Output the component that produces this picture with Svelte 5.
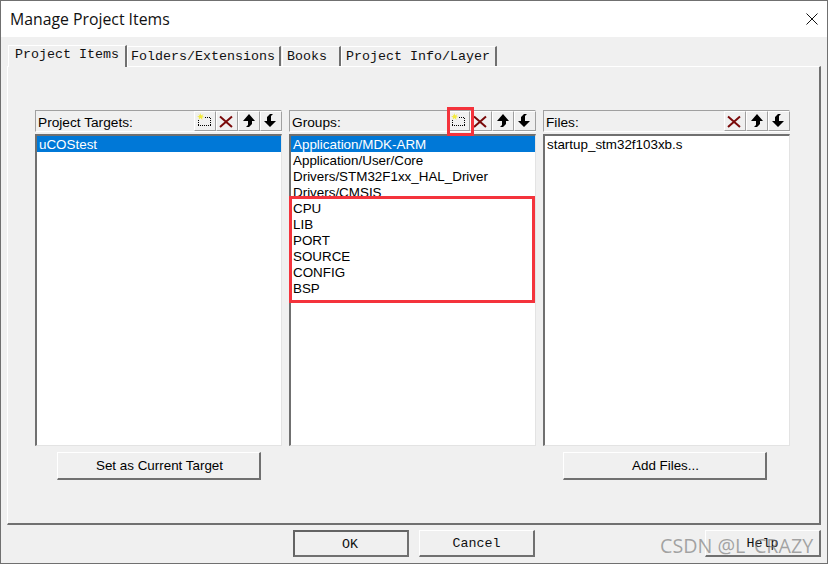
<script>
  const panels = [
    { title: 'Project Targets:', tools: ['new', 'del', 'up', 'down'], items: ['uCOStest'], selected: 0 },
    {
      title: 'Groups:',
      tools: ['new', 'del', 'up', 'down'],
      items: ['Application/MDK-ARM', 'Application/User/Core', 'Drivers/STM32F1xx_HAL_Driver', 'Drivers/CMSIS', 'CPU', 'LIB', 'PORT', 'SOURCE', 'CONFIG', 'BSP'],
      selected: 0
    },
    { title: 'Files:', tools: ['del', 'up', 'down'], items: ['startup_stm32f103xb.s'], selected: -1 }
  ];
  const tabs = ['Project Items', 'Folders/Extensions', 'Books', 'Project Info/Layer'];
</script>

<div class="dialog">
  <header class="titlebar">
    <span class="title">Manage Project Items</span>
    <svg class="close" width="12" height="12" viewBox="0 0 12 12"><path d="M0.5 0.5 L11.5 11.5 M11.5 0.5 L0.5 11.5" stroke="#111" stroke-width="1" fill="none" /></svg>
  </header>

  <div class="body">
    <div class="tabs">
      {#each tabs as tab, i}
        <div class="tab" class:active={i === 0}>{tab}</div>
      {/each}
    </div>

    <div class="sheet">
      <div class="columns">
        {#each panels as panel}
          <section class="panel">
            <div class="panel-head">
              <span class="panel-title">{panel.title}</span>
              <div class="tools">
                {#each panel.tools as tool}
                  <div class="tool">
                    {#if tool === 'new'}
                      <svg width="16" height="16" viewBox="0 0 16 16">
                        <path d="M1 12.5 H14 M13.5 12 V4 M13 4.5 H7 M1.5 12 V7" fill="none" stroke="#000" stroke-width="1" stroke-dasharray="1 1" />
                        <path d="M3.5 0 L4.2 2.4 L6.6 1 L5.2 3.2 L7.4 4 L5 4.4 L5.4 7 L3.6 5 L1.6 6.6 L2.2 4.4 L0 3.6 L2.4 3 L1.4 1 L3 2.2 Z" fill="#f2ea3c" />
                      </svg>
                    {:else if tool === 'del'}
                      <svg width="16" height="16" viewBox="0 0 16 16"><path d="M1 3.5 L13 14 M13 3.5 L1 14" stroke="#7a0a0a" stroke-width="2" fill="none" /></svg>
                    {:else if tool === 'up'}
                      <svg width="16" height="16" viewBox="0 0 16 16"><path d="M8 1 L14 8 L11 8 L11 11 L8 14 L5 14 L7 12 L7 8 L2 8 Z" fill="#000" /></svg>
                    {:else}
                      <svg width="16" height="16" viewBox="0 0 16 16"><path d="M7 14 L1 8 L4 8 L4 4 L7 1 L10 1 L8 3 L8 8 L13 8 Z" fill="#000" /></svg>
                    {/if}
                  </div>
                {/each}
              </div>
            </div>
            <div class="list">
              {#each panel.items as item, i}
                <div class="row" class:selected={i === panel.selected}>{item}</div>
              {/each}
            </div>
          </section>
        {/each}
      </div>
      <div class="actions">
        <button type="button" class="btn">Set as Current Target</button>
        <button type="button" class="btn">Add Files...</button>
      </div>
    </div>

    <div class="footer">
      <button type="button" class="foot-btn default">OK</button>
      <button type="button" class="foot-btn">Cancel</button>
      <button type="button" class="foot-btn help">Help</button>
    </div>
  </div>

  <div class="mark mark-tool"></div>
  <div class="mark mark-list"></div>
  <div class="watermark">CSDN @L_CRAZY</div>
</div>

<style>
  :global(body) {
    margin: 0;
    background: #f0f0f0;
  }

  .dialog {
    position: relative;
    box-sizing: border-box;
    width: 828px;
    height: 564px;
    border: 1px solid #707070;
    background: #f0f0f0;
    overflow: hidden;
    font-family: "Liberation Sans", Arial, sans-serif;
    font-size: 13.33px;
    color: #000;
  }

  .titlebar {
    height: 36px;
    background: #fff;
    display: flex;
    align-items: center;
    justify-content: space-between;
    padding: 0 8px 0 9px;
  }

  .title {
    font-family: "Open Sans", "Liberation Sans", sans-serif;
    font-size: 15.8px;
    color: #111;
  }

  .close {
    margin-right: 1px;
  }

  .body {
    padding: 7px 6px 0 6px;
  }

  .tabs {
    display: flex;
    align-items: flex-end;
    height: 22px;
    padding-left: 1px;
    font-family: "Liberation Mono", monospace;
    font-size: 13.33px;
    color: #111;
  }

  .tab {
    box-sizing: border-box;
    height: 20px;
    padding: 1px 4px 0 3px;
    line-height: 17px;
    border-top: 1px solid #fff;
    border-left: 1px solid #fff;
    border-right: 2px solid #707070;
  }

  .tab:nth-child(3) {
    padding: 1px 12px 0 4px;
    margin-left: 1px;
  }

  .tab:nth-child(4) {
    padding: 1px 5px 0 4px;
  }

  .tab.active {
    height: 22px;
    padding: 0 6px 0 6px;
    line-height: 18px;
    margin-bottom: -1px;
    position: relative;
    background: #f0f0f0;
  }

  .sheet {
    box-sizing: border-box;
    height: 459px;
    border-top: 1px solid #fff;
    border-left: 1px solid #fff;
    border-right: 2px solid #707070;
    border-bottom: 2px solid #707070;
    padding: 43px 30px 0 27px;
  }

  .columns {
    display: grid;
    grid-template-columns: repeat(3, 247px);
    column-gap: 7px;
  }

  .panel-head {
    box-sizing: border-box;
    height: 22px;
    display: flex;
    align-items: center;
    justify-content: space-between;
    padding-left: 2px;
    border: 1px solid #a0a0a0;
    border-right-color: #fff;
    border-bottom-color: #fff;
  }

  .panel-title {
    padding-top: 2px;
    font-size: 13.7px;
  }

  .tools {
    display: flex;
    margin-right: -1px;
  }

  .tool {
    box-sizing: border-box;
    width: 22px;
    height: 20px;
    display: flex;
    align-items: center;
    justify-content: center;
    background: #f0f0f0;
    border-left: 1px solid #fff;
    border-top: 1px solid #fff;
    border-right: 1px solid #a0a0a0;
    border-bottom: 1px solid #a0a0a0;
  }

  .list {
    box-sizing: border-box;
    height: 312px;
    margin-top: 2px;
    background: #fff;
    border-top: 2px solid #707070;
    border-left: 2px solid #707070;
    border-right: 1px solid #e3e3e3;
    border-bottom: 1px solid #e3e3e3;
    overflow: hidden;
  }

  .row {
    box-sizing: border-box;
    height: 16px;
    line-height: 16px;
    padding: 1px 0 0 2px;
    white-space: nowrap;
    font-size: 13.4px;
  }

  .row.selected {
    background: #0078d7;
    color: #fff;
  }

  .actions {
    display: flex;
    justify-content: space-between;
    margin-top: 6px;
    padding: 0 22px 0 22px;
  }

  .btn,
  .foot-btn {
    box-sizing: border-box;
    background: #f0f0f0;
    border-top: 1px solid #fff;
    border-left: 1px solid #fff;
    border-right: 2px solid #707070;
    border-bottom: 2px solid #707070;
    color: #000;
    padding: 0;
  }

  .btn {
    width: 204px;
    height: 28px;
    padding-left: 2px;
    font-family: "Liberation Sans", Arial, sans-serif;
    font-size: 13.4px;
  }

  .footer {
    display: flex;
    margin-top: 5px;
    padding-left: 286px;
  }

  .foot-btn {
    width: 116px;
    height: 27px;
    margin-right: 10px;
    padding-top: 1px;
    font-family: "Liberation Mono", monospace;
    font-size: 13.33px;
    color: #111;
  }

  .foot-btn.default {
    border: 2px solid #707070;
    border-top-color: #646464;
    border-left-color: #646464;
    padding-right: 2px;
  }

  .foot-btn.help {
    margin-left: 160px;
    margin-right: 0;
  }

  .mark {
    position: absolute;
    box-sizing: border-box;
    border: 3px solid #f4333c;
    pointer-events: none;
  }

  .mark-tool {
    left: 446px;
    top: 106px;
    width: 27px;
    height: 29px;
  }

  .mark-list {
    left: 288px;
    top: 195px;
    width: 246px;
    height: 107px;
  }

  .watermark {
    position: absolute;
    left: 659px;
    top: 531px;
    font-family: "Open Sans", "Liberation Sans", sans-serif;
    font-size: 19.7px;
    color: rgba(110, 110, 110, 0.6);
    white-space: nowrap;
  }
</style>
